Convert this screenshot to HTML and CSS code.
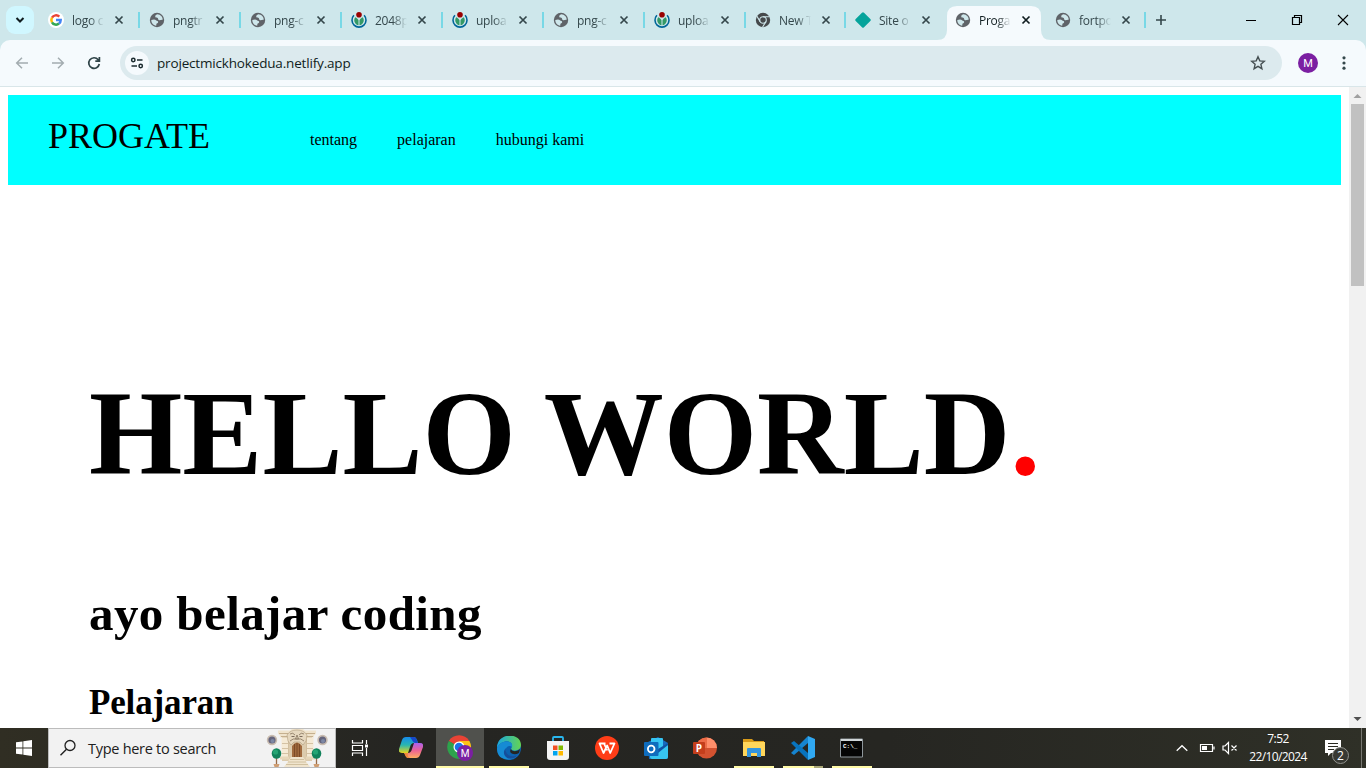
FILE: index.html
```html
<!DOCTYPE html>
<html lang="id">
<head>
<meta charset="utf-8">
<title>Progate</title>
<link rel="stylesheet" href="styles.css">
</head>
<body>
<svg class="defs" width="0" height="0">
  <symbol id="globe" viewBox="0 0 16 16"><circle cx="8" cy="8" r="7.200" fill="#5f6368"/><path d="M8.300 2.300c-1.500.5-2.300 1.500-2 2.600.3 1.200 2.100.3 2.600 1.300.4 1 .2 1.800 1.400 2 1.200.1 2-.6 3.400-.4.2-2.600-2-5.300-5.400-5.500ZM2.300 8c-.1 3 1.900 5.300 4.900 5.800l.2-1.700c.2-1 1.800-.8 1.800-2.100 0-1.200-1.600-1-2.200-1.700C6.200 7.200 4 7.400 2.300 8Z" fill="#cee7eb"/></symbol>
  <symbol id="commons" viewBox="0 0 16 16"><path d="M2.900 3.300a7 7 0 1 0 10.200 0" fill="none" stroke="#069" stroke-width="1.600"/><path d="M4.300 5.200a5 5 0 0 0 3.200 8V8.300C6.800 6.700 5.500 6 4.300 5.200ZM11.700 5.200a5 5 0 0 1-3.200 8V8.300c.7-1.600 2-2.300 3.200-3.100Z" fill="#396"/><circle cx="8" cy="2.800" r="2.800" fill="#900"/></symbol>
  <symbol id="close" viewBox="0 0 10 10"><path d="m1.500 1.500 7 7m0-7-7 7" fill="none" stroke="currentColor" stroke-width="1.700"/></symbol>
</svg>
<div class="screen">
  <div class="tabstrip">
    <button class="tabsearch"><svg width="10" height="8" viewBox="0 0 10 8"><path d="m1.500 2 3.500 3.500L8.500 2" fill="none" stroke="#101d20" stroke-width="2"/></svg></button>
    <div class="tabs">
      <div class="tab"><svg class="fav" viewBox="0 0 16 16"><circle cx="8" cy="8" r="8" fill="#fff"/><g fill="none" stroke-width="2.500"><path d="M4 5.700a4.700 4.700 0 0 1 7.300-1.100" stroke="#ea4335"/><path d="M4 10.300a4.700 4.700 0 0 1 0-4.600" stroke="#fbbc05"/><path d="M11 11.600A4.700 4.700 0 0 1 4 10.300" stroke="#34a853"/><path d="M8 8h4.700a4.700 4.700 0 0 1-1.700 3.600" stroke="#4285f4"/></g></svg><span class="label">logo c</span><svg class="x"><use href="#close"/></svg></div>
      <div class="tab"><svg class="fav"><use href="#globe"/></svg><span class="label">pngtr</span><svg class="x"><use href="#close"/></svg></div>
      <div class="tab"><svg class="fav"><use href="#globe"/></svg><span class="label">png-c</span><svg class="x"><use href="#close"/></svg></div>
      <div class="tab"><svg class="fav"><use href="#commons"/></svg><span class="label">2048p</span><svg class="x"><use href="#close"/></svg></div>
      <div class="tab"><svg class="fav"><use href="#commons"/></svg><span class="label">uploa</span><svg class="x"><use href="#close"/></svg></div>
      <div class="tab"><svg class="fav"><use href="#globe"/></svg><span class="label">png-c</span><svg class="x"><use href="#close"/></svg></div>
      <div class="tab"><svg class="fav"><use href="#commons"/></svg><span class="label">uploa</span><svg class="x"><use href="#close"/></svg></div>
      <div class="tab slim"><svg class="fav" viewBox="0 0 16 16"><circle cx="8" cy="8" r="7.200" fill="#45494b"/><g fill="none" stroke="#cee7eb" stroke-width="1.100"><circle cx="8" cy="8" r="3.300"/><path d="M8 4.700h6.500M5.100 9.600 1.800 4M10.900 9.600 7.500 15.300"/></g></svg><span class="label">New T</span><svg class="x"><use href="#close"/></svg></div>
      <div class="tab slim last"><svg class="fav" viewBox="0 0 16 16"><path d="M7 .700q1-1 2 0L15.300 7q1 1 0 2L9 15.300q-1 1-2 0L.700 9q-1-1 0-2Z" fill="#05a39b"/></svg><span class="label">Site o</span><svg class="x"><use href="#close"/></svg></div>
      <div class="tab slim active"><svg class="shape" width="114" height="34" viewBox="0 0 114 34"><path d="M0 34Q10 34 10 24V10Q10 0 20 0H94Q104 0 104 10V24Q104 34 114 34Z" fill="#f5fafd"/></svg><svg class="fav"><use href="#globe"/></svg><span class="label">Proga</span><svg class="x"><use href="#close"/></svg></div>
      <div class="tab slim"><svg class="fav"><use href="#globe"/></svg><span class="label">fortpo</span><svg class="x"><use href="#close"/></svg></div>
    </div>
    <svg class="plus" width="12" height="12" viewBox="0 0 12 12"><path d="M6 1v10M1 6h10" stroke="#34474b" stroke-width="1.600"/></svg>
    <div class="winbtns">
      <svg viewBox="0 0 12 12"><path d="M1 6.500h10" stroke="#000"/></svg>
      <svg viewBox="0 0 12 12"><path d="M1.500 3.500h7v7h-7ZM3.500 3.500v-2h7v7h-2" fill="none" stroke="#000" stroke-width="1.200"/></svg>
      <svg viewBox="0 0 12 12"><path d="m1 1 10 10m0-10L1 11" stroke="#000" stroke-width="1.100"/></svg>
    </div>
  </div>
  <div class="toolbar">
    <svg class="nav" viewBox="0 0 16 16"><path d="M14 8H3m5-5.300L2.700 8 8 13.300" fill="none" stroke="#a3acb0" stroke-width="1.500"/></svg>
    <svg class="nav" viewBox="0 0 16 16"><path d="M2 8h11M8 2.700 13.300 8 8 13.300" fill="none" stroke="#a3acb0" stroke-width="1.500"/></svg>
    <svg class="nav" viewBox="0 0 16 16"><path d="M13.300 9A5.300 5.300 0 1 1 12.200 4.700L13 5.600M13.400 2v4.200H9.300" fill="none" stroke="#2e4347" stroke-width="1.700"/></svg>
    <div class="omnibox">
      <span class="site"><svg width="14" height="14" viewBox="0 0 14 14"><g fill="none" stroke="#1b2b2f" stroke-width="1.500"><circle cx="3.300" cy="4" r="1.700"/><path d="M7 4h5.500M1.500 10H7"/><circle cx="10.700" cy="10" r="1.700"/></g></svg></span>
      <span class="url">projectmickhokedua.netlify.app</span>
      <svg class="star" width="16" height="16" viewBox="0 0 16 16"><path d="m8 1.800 1.800 4.100 4.500.4-3.400 3 1 4.400L8 11.300l-3.900 2.400 1-4.400-3.400-3 4.500-.4Z" fill="none" stroke="#454f52" stroke-width="1.400"/></svg>
    </div>
    <span class="avatar">M</span>
    <svg class="dots" width="4" height="16" viewBox="0 0 4 16"><g fill="#34474b"><circle cx="2" cy="2.800" r="1.600"/><circle cx="2" cy="8" r="1.600"/><circle cx="2" cy="13.200" r="1.600"/></g></svg>
  </div>
  <div class="viewport">
    <main class="page">
      <header class="header">
        <div class="logo">PROGATE</div>
        <nav class="menu"><a>tentang</a><a>pelajaran</a><a>hubungi kami</a></nav>
      </header>
      <section class="hero">
        <h1>HELLO WORLD<span>.</span></h1>
        <h2>ayo belajar coding</h2>
        <h3>Pelajaran</h3>
      </section>
    </main>
    <div class="scrollbar">
      <svg width="17" height="17" viewBox="0 0 17 17"><path d="m4.500 11 4-4 4 4Z" fill="#a0a0a0"/></svg>
      <div class="thumb"></div>
      <svg class="down" width="17" height="17" viewBox="0 0 17 17"><path d="m4.500 6 4 4 4-4Z" fill="#505050"/></svg>
    </div>
  </div>
  <div class="taskbar">
    <div class="start"><svg width="16" height="16" viewBox="0 0 16 16"><path d="M0 2.300 6.500 1.400v6.200H0ZM7.300 1.300 16 0v7.600H7.300ZM0 8.400h6.500v6.200L0 13.700ZM7.300 8.400H16V16l-8.700-1.300Z" fill="#fff"/></svg></div>
    <div class="search">
      <svg width="18" height="18" viewBox="0 0 18 18"><circle cx="11" cy="6.500" r="5" fill="none" stroke="#202020" stroke-width="1.300"/><path d="m7.500 10.200-6 6" stroke="#202020" stroke-width="1.400"/></svg>
      <span>Type here to search</span>
      <svg class="gate" width="62" height="38" viewBox="0 0 62 38">
        <g fill="#65657d" stroke="#c9bcb0" stroke-width="1.600"><circle cx="6" cy="11" r="4.400"/><circle cx="56.500" cy="11" r="4.400"/></g><g fill="#7d88a5"><circle cx="6.500" cy="12" r="2"/><circle cx="57" cy="12" r="2"/></g>
        <path d="M16 8h30v24H16Z" fill="#dccbad"/>
        <path d="M12 1.500h12l2-1.500h11l2 1.500h11v3l-2 2v2H14v-2l-2-2Z" fill="#f0e4cd"/><path d="M13 4.500h11m15 0h10M15 7.500h8m17 0h7" stroke="#bfa988" stroke-width=".9"/>
        <path d="M15.500 9h7v20h-7ZM40.500 9h7v20h-7Z" fill="#f5ead5"/><path d="M16 14.500h6m-6 5h6m-6 5h6m19-10h6m-6 5h6m-6 5h6M22.500 10v19m18-19v19" stroke="#cbb897" stroke-width=".8"/><path d="M14 27.500h9v3h-9Zm26 0h9v3h-9Z" fill="#e6d6b8"/>
        <path d="M21 6q3-5 10-5t10 5l-1 6-3 4-3-3h-6l-3 3-3-4Z" fill="#e6d8bf" stroke="#b29e80" stroke-width=".6"/><path d="M24 5q3-2 5 1m4 0q2-3 5-1M31 6l-1.500 4h3L31 6M24 12q3-3 7-2 4-1 7 2" fill="none" stroke="#8f7d67" stroke-width=".9"/><path d="M25.500 7.500h3m5 0h3" stroke="#7b6b5b"/>
        <path d="M26 28V17q5-7 10 0v11Z" fill="#a06a3e"/><path d="M28.500 28V15m2.500 13V14m2.500 14V15" stroke="#724322" stroke-width=".8"/>
        <path d="M25 28h12l7 10H18Z" fill="#f0e4cd"/><path d="M24 30.500h14m-16 2.500h18m-20 2.500h22" stroke="#c9b794" stroke-width=".8"/>
        <path d="M10.500 28v9m40-9v9" stroke="#966a48" stroke-width="1.300"/><path d="M7.500 35h6l-1 3h-4Zm40 0h6l-1 3h-4Z" fill="#cf9e73"/><g fill="#11825b"><ellipse cx="10.500" cy="24.500" rx="4.800" ry="5.200"/><ellipse cx="50.500" cy="24.500" rx="4.800" ry="5.200"/></g><g fill="#24a473"><circle cx="9.500" cy="23" r="2.600"/><circle cx="49.500" cy="23" r="2.600"/></g>
      </svg>
    </div>
    <div class="apps">
      <div class="app view"><svg viewBox="0 0 24 24"><path d="M4.500 4v3h10V4M4.500 20v-3h10v3M4.500 9.500h10v5h-10ZM18.500 4v4m0 4v8" fill="none" stroke="#fff" stroke-width="1.200"/><path d="M17 8.500h3v3h-3Z" fill="#fff"/></svg></div>
      <div class="app"><svg viewBox="0 0 24 24"><defs><linearGradient id="ca" x2="0" y2="1"><stop stop-color="#168bed"/><stop offset=".5" stop-color="#28b6b0"/><stop offset="1" stop-color="#e7d51d"/></linearGradient><linearGradient id="cb" x2="0" y2="1"><stop stop-color="#aa61ee"/><stop offset=".5" stop-color="#ed6394"/><stop offset="1" stop-color="#ffad60"/></linearGradient></defs><path d="M7 1h8q2 0 3 3l1 3h-4q-3 0-4 4l-2 6H3q-4 0-3-4L3 4q1-3 4-3Z" fill="url(#ca)"/><path d="M15 7h6q4 0 3 4l-3 8q-1 3-4 3H9q-2 0-3-4l-1-1h4q3 0 4-4Z" fill="url(#cb)"/><path d="M11 1h4q2 0 3 3l1 3h-3q-2 0-3-3Z" fill="#1748c9"/><path d="M5 17h4q-1 4 2 5H9q-2 0-3-3Z" fill="#ef873a"/></svg></div>
      <div class="app current"><svg viewBox="0 0 26 26"><path d="M12 12 1.800 6A12 12 0 0 1 22.400 6Z" fill="#e94335"/><path d="M12 12 22.400 6H12L17 15l-5 9A12 12 0 0 0 22.400 6Z" fill="#fbc116"/><path d="M12 12 1.800 6A12 12 0 0 0 12 24l5-9Z" fill="#2da24c"/><circle cx="12" cy="12" r="5.500" fill="#fff"/><circle cx="12" cy="12" r="4.300" fill="#1a73e8"/><circle cx="18" cy="18" r="8" fill="#7b1fa2"/><text x="18" y="21.500" text-anchor="middle" class="badgem">M</text></svg></div>
      <div class="app run"><svg viewBox="0 0 24 24"><defs><linearGradient id="ea"><stop stop-color="#1aa7df"/><stop offset="1" stop-color="#64d453"/></linearGradient></defs><circle cx="12" cy="12" r="12" fill="#0c62b0"/><path d="M0 12C0-4 24-4 24 9c0 6-8 7-10 4 5-9-9-11-14-1Z" fill="url(#ea)"/><path d="M0 12C4 3 17 4 15 11c-3-3-8 1-6 6 2 6 10 4 13 1-5 7-13 6-17 4C1 20 0 16 0 12Z" fill="#168bd4"/><path d="M9 12c-2 7 6 11 13 6-5 6-11 6-14 2-2-3-1-6 1-8Z" fill="#154e9b"/><path d="M14 13c1 3 6 3 9 0l-1 4c-5 3-11 0-8-4Z" fill="#252522"/></svg></div>
      <div class="app"><svg viewBox="0 0 24 24"><path d="M7 6V2q0-1 1-1h8q1 0 1 1v4" fill="none" stroke="#29b7ef" stroke-width="1.800"/><path d="M1 5h22v16q0 3-3 3H4q-3 0-3-3Z" fill="#f4f4f4"/><path d="M7 9.500h4.500V14H7Z" fill="#f25022"/><path d="M12.500 9.500H17V14h-4.500Z" fill="#7fba00"/><path d="M7 15h4.500v4.500H7Z" fill="#00a4ef"/><path d="M12.500 15H17v4.500h-4.500Z" fill="#ffb900"/></svg></div>
      <div class="app"><svg viewBox="0 0 24 24"><circle cx="12" cy="12" r="12" fill="#ff3d17"/><path d="M10.500 7.500h-6l4 9.500 3.700-7.500 3 7.500L19.500 7.500h-5M9 7.500l3.200 7" fill="none" stroke="#fff" stroke-width="1.800" stroke-linejoin="round"/></svg></div>
      <div class="app"><svg viewBox="0 0 24 24"><path d="m4 6 10-5 10 6v14q0 2-2 2H5Z" fill="#1769bd"/><path d="M7 3q0-1 1-1h10q1 0 1 1v12H7Z" fill="#36c4f3"/><path d="m6 17 18-8v12q0 2-2 2H8q-2 0-2-2Z" fill="#37c5f0"/><path d="m14 17 10-8V7L14 13Z" fill="#1052a3"/><rect y="6" width="14.500" height="14" rx="1" fill="#0f6cbd"/><circle cx="7.200" cy="13" r="3.300" fill="none" stroke="#fff" stroke-width="1.800"/></svg></div>
      <div class="app"><svg viewBox="0 0 24 24"><circle cx="13.500" cy="12" r="10.500" fill="#d35230"/><path d="M13.500 1.500A10.500 10.500 0 0 1 24 12H13.500Z" fill="#ff8f6b"/><path d="M3 12A10.500 10.500 0 0 1 13.500 1.500V12Z" fill="#ed6c47"/><rect y="6" width="12" height="12" rx="1" fill="#c43e1c"/><text x="6" y="15.500" text-anchor="middle" class="ppt">P</text></svg></div>
      <div class="app run"><svg viewBox="0 0 24 24"><path d="M1 3h9l2 2h10v5H1Z" fill="#d99b19"/><path d="M1 6h22v14H1Z" fill="#ffd65b"/><path d="M5 21v-8q0-1 1-1h12q1 0 1 1v8h-4v-4H9v4Z" fill="#3495de"/></svg></div>
      <div class="app run code"><svg viewBox="0 0 24 24"><path d="m17 0 7 3v18l-7 3Z" fill="#30a8f2"/><path d="M17 0v7L3 19l-3-2Z" fill="#1684cf"/><path d="M0 7l3-2 14 12v7Z" fill="#0873bd"/></svg></div>
      <div class="app run"><svg viewBox="0 0 24 24"><path d="M.500 3h22v18H.500Z" fill="#050505" stroke="#8e969b"/><path d="M1 3h21v2H1Z" fill="#cfd5d8"/><text x="3" y="11.500" class="cmd">C:\_</text></svg></div>
    </div>
    <div class="tray">
      <svg width="12" height="12" viewBox="0 0 12 12"><path d="m.7 8.700 5.300-5 5.300 5" fill="none" stroke="#fff" stroke-width="1.300"/></svg>
      <svg width="16" height="12" viewBox="0 0 16 12"><path d="M1.500 2.500h12v7h-12ZM15 4.500v3" fill="none" stroke="#fff" stroke-width="1.200"/><path d="M3 4h5v4H3Z" fill="#fff"/></svg>
      <svg width="16" height="14" viewBox="0 0 16 14"><path d="M1 5h2l3.500-3.500v11L3 9H1ZM9.500 4.500l5 5m0-5-5 5" fill="none" stroke="#fff" stroke-width="1.200"/></svg>
      <div class="clock"><span>7:52</span><span>22/10/2024</span></div>
      <div class="notif"><svg width="16" height="16" viewBox="0 0 16 16"><path d="M0 0h16v13H6l-3 3v-3H0Z" fill="#fff"/><path d="M3 3.500h10M3 6.500h10M3 9.500h6" stroke="#2b2b23"/></svg><span>2</span></div>
      <div class="peek"></div>
    </div>
  </div>
</div>
</body>
</html>
```
FILE: styles.css
```css
* { box-sizing: border-box; }
body { margin: 0; overflow: hidden; font-family: "Open Sans", "Noto Sans", sans-serif; }
svg { display: block; flex: none; }
.defs { position: absolute; }
.screen { width: 1366px; height: 768px; display: flex; flex-direction: column; background: #cee7eb; }

.tabstrip { height: 40px; flex: none; display: flex; align-items: center; padding-left: 6px; }
.tabsearch { width: 28px; height: 28px; border: 0; border-radius: 9px; background: #d0f7ff; display: grid; place-items: center; padding: 0; flex: none; }
.tabs { display: flex; margin-left: 4px; align-self: stretch; }
.tab { width: 101px; padding-left: 10px; display: flex; align-items: center; color: #34474b; position: relative; }
.tab.slim { width: 100px; }
.tab::after { content: ""; position: absolute; right: -1px; top: 12px; width: 2px; height: 16px; background: #78d8e6; }
.tab.last::after, .tab.active::after { display: none; }
.fav { width: 16px; height: 16px; }
.label { width: 32px; margin-left: 8px; padding-top: 2px; font-size: 12px; letter-spacing: -.25px; line-height: 20px; white-space: nowrap; mask-image: linear-gradient(to right, #000 55%, transparent); }
.x { width: 10px; height: 10px; margin-left: 10px; }
.tab.active { color: #101d20; }
.tab.active > .fav, .tab.active > .label, .tab.active > .x { position: relative; }
.shape { position: absolute; left: -8px; bottom: 0; }
.plus { margin-left: 10px; }
.winbtns { display: flex; margin-left: auto; }
.winbtns svg { width: 46px; height: 12px; }

.toolbar { height: 47px; flex: none; display: flex; align-items: center; background: #f5fafd; border-bottom: 1px solid #d9e6e9; border-radius: 10px 10px 0 0; padding-left: 14px; }
.nav { width: 16px; height: 16px; margin-right: 20px; }
.nav:nth-child(3) { margin-right: 18px; }
.omnibox { width: 1162px; height: 34px; border-radius: 17px; background: #dceaee; display: flex; align-items: center; padding: 0 16px 0 5px; }
.site { width: 24px; height: 24px; border-radius: 50%; background: #f5fafd; display: grid; place-items: center; }
.url { font-size: 13.500px; letter-spacing: -.17px; margin-left: 8px; color: #101d20; }
.star { margin-left: auto; }
.avatar { width: 20px; height: 20px; margin-left: 16px; border-radius: 50%; background: #7b1fa2; color: #fff; font: 11px/21px Roboto, sans-serif; text-align: center; }
.dots { margin-left: 24px; }

.viewport { flex: 1; min-height: 0; display: flex; background: #fff; }
.page { flex: 1; padding: 8px; overflow: hidden; font-family: "Liberation Serif", serif; color: #000; }
.header { height: 90px; display: flex; background: #0ff; padding: 21px 40px 0; }
.logo { width: 262px; font-size: 36px; line-height: 41px; }
.menu { display: flex; gap: 40px; font-size: 16px; line-height: 18px; padding-top: 15px; }
.hero { padding: 180px 0 0 81px; }
.hero h1 { margin: 0; font-size: 120px; line-height: 138px; white-space: nowrap; }
.hero h1 span { color: red; }
.hero h2 { margin: 82px 0 0; font-size: 49px; letter-spacing: .4px; line-height: 58px; }
.hero h3 { margin: 40px 0 0; font-size: 35px; letter-spacing: -.15px; line-height: 40px; }
.scrollbar { width: 17px; background: #f1f1f1; display: flex; flex-direction: column; }
.thumb { width: 13px; height: 182px; margin-left: 2px; background: #c1c1c1; }
.down { margin-top: auto; }

.taskbar { height: 40px; flex: none; display: flex; background: linear-gradient(90deg, #302e23, #252522 30%, #262622 65%, #2f3027); color: #fff; }
.start { width: 48px; display: grid; place-items: center; }
.search { width: 288px; background: #f2f2f2; border: 1px solid #bcbcbc; display: flex; align-items: center; padding: 0 7px 0 10px; color: #202020; font-size: 14.500px; }
.search span { margin-left: 11px; letter-spacing: -.28px; white-space: nowrap; }
.gate { margin-left: auto; }
.apps { display: flex; gap: 1px; }
.app { width: 48px; display: grid; place-items: center; position: relative; }
.app svg { width: 24px; height: 24px; }
.view { margin-right: 2px; }
.current { background: #50514d; }
.current svg { width: 26px; height: 26px; }
.current::after, .run::after { content: ""; position: absolute; bottom: 0; left: 4px; width: 40px; height: 2px; background: #fffaa7; }
.current::after { left: 0; width: 48px; }
.code::after { background: linear-gradient(90deg, #fffaa7 31px, #aaa878 31px); }
.badgem { font: 10px Roboto, sans-serif; fill: #fff; }
.ppt { font: bold 10px "Open Sans", sans-serif; fill: #fff; }
.cmd { font: bold 6px "Liberation Mono", monospace; fill: #fff; }
.tray { margin-left: auto; display: flex; align-items: center; }
.tray > svg { margin-right: 10px; }
.tray > svg:first-child { margin-right: 11px; }
.tray > svg:nth-child(2) { margin-right: 7px; }
.tray > svg:nth-child(3) { margin-right: 7px; }
.clock { width: 66px; font-size: 12px; line-height: 18px; letter-spacing: -.6px; display: flex; flex-direction: column; align-items: center; }
.notif { position: relative; margin-left: 14px; width: 24px; }
.notif span { position: absolute; left: 7px; top: 7px; width: 17px; height: 17px; border: 1px solid #92938e; border-radius: 50%; background: #383933; font-size: 12px; line-height: 15px; text-align: center; }
.peek { width: 5px; height: 40px; margin-left: 12px; border-left: 1px solid #777771; }
```
